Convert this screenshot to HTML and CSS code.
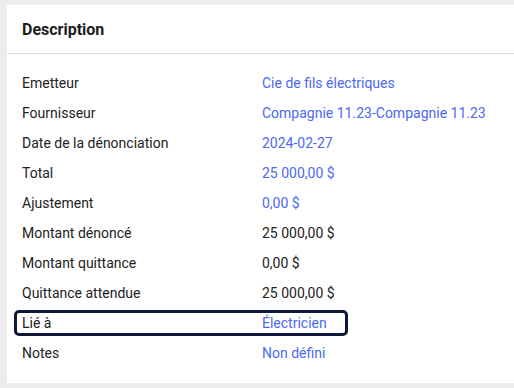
FILE: index.html
```html
<!DOCTYPE html>
<html lang="fr">
<head>
  <meta charset="UTF-8">
  <meta name="viewport" content="width=device-width, initial-scale=1.0">
  <title>Description</title>
  <link rel="stylesheet" href="styles.css">
</head>
<body>
  <!-- carte description -->
  <div class="card">
    <div class="card-header">
      <h2>Description</h2>
    </div>

    <div class="card-body">
      <div class="row">
        <span class="label">Emetteur</span>
        <span class="value link">Cie de fils électriques</span>
      </div>
      <div class="row">
        <span class="label">Fournisseur</span>
        <span class="value link">Compagnie 11.23-Compagnie 11.23</span>
      </div>
      <div class="row">
        <span class="label">Date de la dénonciation</span>
        <span class="value link">2024-02-27</span>
      </div>
      <div class="row">
        <span class="label">Total</span>
        <span class="value link">25 000,00 $</span>
      </div>
      <div class="row">
        <span class="label">Ajustement</span>
        <span class="value link">0,00 $</span>
      </div>
      <div class="row">
        <span class="label">Montant dénoncé</span>
        <span class="value">25 000,00 $</span>
      </div>
      <div class="row">
        <span class="label">Montant quittance</span>
        <span class="value">0,00 $</span>
      </div>
      <div class="row">
        <span class="label">Quittance attendue</span>
        <span class="value">25 000,00 $</span>
      </div>
      <!-- ligne avec focus -->
      <div class="row focused">
        <span class="label">Lié à</span>
        <span class="value link">Électricien</span>
      </div>
      <div class="row">
        <span class="label">Notes</span>
        <span class="value link">Non défini</span>
      </div>
    </div>
  </div>
</body>
</html>
```

FILE: styles.css
```css
body {
  font-family: 'Roboto', 'Liberation Sans', sans-serif;
  background-color: #ececec;
  color: #222;
  margin: 0;
  padding: 5px 0 0 7px;
  height: 388px;
  box-sizing: border-box;
  overflow: hidden;
}

.card {
  background-color: #fff;
  height: 378px;
}

.card-header {
  height: 48px;
  border-bottom: 1px solid #dcdcdc;
  padding: 0 15px;
  display: flex;
  align-items: center;
}

.card-header h2 {
  margin: 0;
  font-size: 16px;
  font-weight: 700;
  color: #1c1c1c;
}

.card-body {
  padding: 16px 0 0 7px;
  display: flex;
  flex-direction: column;
  gap: 4px;
}

.row {
  width: 334px;
  height: 26px;
  padding-left: 8px;
  box-sizing: border-box;
  display: flex;
  align-items: center;
  font-size: 14px;
}

.label {
  width: 240px;
  flex-shrink: 0;
  white-space: nowrap;
}

.value {
  white-space: nowrap;
}

.link {
  color: #4b69f2;
}

/* ligne sélectionnée */
.focused {
  outline: 3px solid #0e1838;
  outline-offset: -3px;
  border-radius: 5px;
}
```
